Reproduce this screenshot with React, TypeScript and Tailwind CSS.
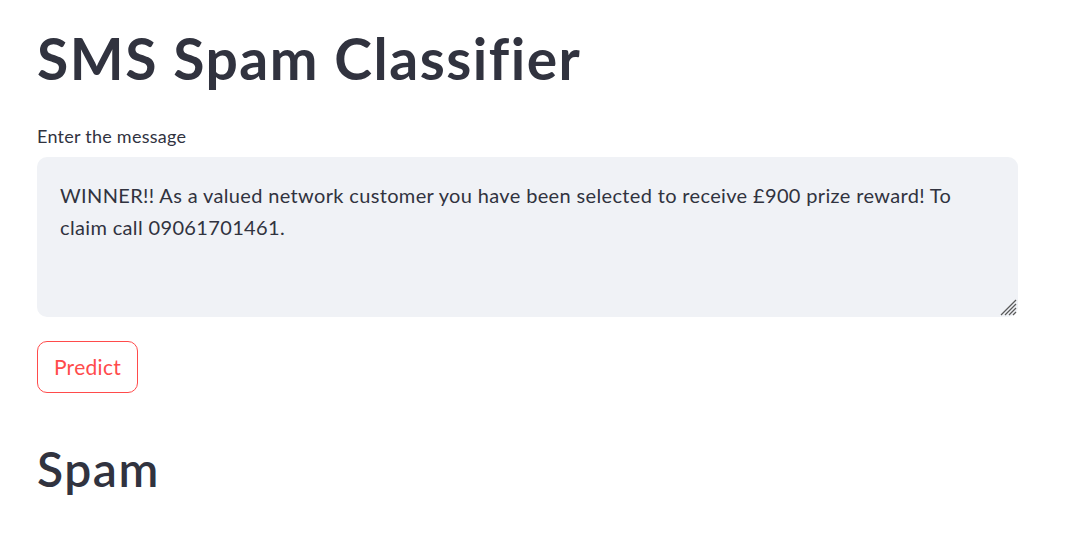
import React from "react";

export default function App() {
  return (
    <div
      className="min-h-[535px] w-full bg-white text-[#31333F]"
      style={{ fontFamily: "Lato, 'Noto Sans', sans-serif" }}
    >
      <div className="flex w-[981px] flex-col pl-[37px] pt-[22px] box-content">
        <h1 className="text-[57px] font-bold leading-[72px] tracking-[1.5px]">SMS Spam Classifier</h1>
        <label className="mt-[30px] text-[18px] leading-[24px] tracking-[0.25px]">Enter the message</label>
        <div className="relative mt-[9px] h-[160px] w-[981px] rounded-[10px] bg-[#F0F2F6] px-[23px] pt-[22px]">
          <p className="text-[20px] leading-[32px] tracking-[0.35px]">
            WINNER!! As a valued network customer you have been selected to receive £900 prize reward! To claim call 09061701461.
          </p>
          <svg className="absolute bottom-[1px] right-[1px]" width="18" height="18" viewBox="0 0 18 18">
            <line x1="17" y1="2" x2="2" y2="17" stroke="#5a5a5a" strokeWidth="1.3" />
            <line x1="17" y1="6" x2="6" y2="17" stroke="#5a5a5a" strokeWidth="1.3" />
            <line x1="17" y1="10" x2="10" y2="17" stroke="#5a5a5a" strokeWidth="1.3" />
            <line x1="17" y1="14" x2="14" y2="17" stroke="#5a5a5a" strokeWidth="1.3" />
          </svg>
        </div>
        <div className="mt-[24px]">
          <button className="h-[52px] w-[101px] rounded-[10px] border border-[#FF4B4B] bg-white text-[21px] tracking-[0.3px] text-[#FF4B4B]">
            Predict
          </button>
        </div>
        <h2 className="mt-[46px] text-[48px] font-semibold leading-[60px] tracking-[1.5px]">Spam</h2>
      </div>
    </div>
  );
}
